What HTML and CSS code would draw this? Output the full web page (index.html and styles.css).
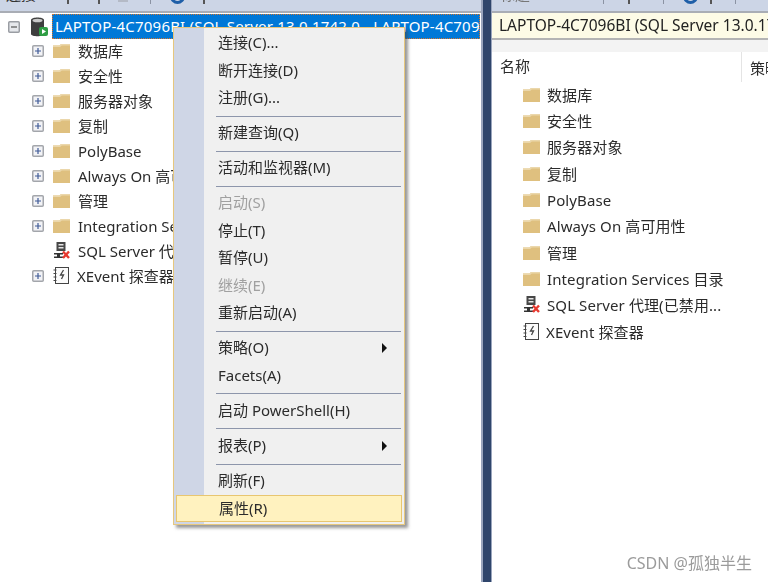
FILE: index.html
```html
<!DOCTYPE html>
<html lang="zh">
<head>
<meta charset="utf-8">
<title>SSMS</title>
<link rel="stylesheet" href="styles.css">
</head>
<body>
<svg class="defs" width="0" height="0">
  <symbol id="folder" viewBox="0 0 17 15">
    <path d="M0 2.500h6.500L8 1h9v14H0z" fill="#dfc07f"/>
    <path d="M8 1h9v1.600H8.800L7 4H0V2.500h6.500z" fill="#ebd7ab"/>
  </symbol>
  <symbol id="plus" viewBox="0 0 12 12">
    <rect x=".75" y=".75" width="10.500" height="10.500" rx="1" fill="#f2f3f6" stroke="#a3a6ab" stroke-width="1.500"/>
    <path d="M3 6h6M6 3v6" stroke="#3f5a96" stroke-width="1.200"/>
  </symbol>
  <symbol id="agent" viewBox="0 0 17 17">
    <path d="M3.500 0h9v9h-9z" fill="#474747"/>
    <path d="M5.500 2h5v1.500h-5zM5.500 5h5v1.500h-5z" fill="#e6e6e6"/>
    <path d="M1 11h9v1.500H7v2h3V16H1v-1.500h3v-2H1z" fill="#333"/>
    <path d="M10 9.500l6 6.500M16 9.500l-6 6.500" stroke="#e8392f" stroke-width="2.400"/>
  </symbol>
  <symbol id="xevent" viewBox="0 0 16 17">
    <rect x="2.500" y=".5" width="13" height="16" fill="#fbfbfb" stroke="#444"/>
    <path d="M.5 3h3M.5 6.500h3M.5 10h3M.5 13.500h3" stroke="#444"/>
    <path d="M10.500 3L7.500 8h3l-2 4" fill="none" stroke="#444" stroke-width="1.300"/>
  </symbol>
</svg>
<div class="screen">
  <section class="left">
    <div class="toolbar">
      <span class="tool-text tool-l1">连接</span>
      <span class="tool-bit tool-l2"></span>
      <span class="tool-bit tool-l3"></span>
      <span class="tool-faint-box tool-l4"></span>
      <span class="tool-sep tool-l5"></span>
      <span class="tool-circle tool-l6"></span>
      <span class="tool-bit tool-l7"></span>
    </div>
    <div class="tree">
      <div class="tree-row root-row">
        <svg class="expander" width="12" height="12" viewBox="0 0 12 12"><rect x=".75" y=".75" width="10.500" height="10.500" rx="1" fill="#e6e8ec" stroke="#9a9da3" stroke-width="1.500"/><path d="M3 6h6" stroke="#555" stroke-width="1.200"/></svg>
        <svg class="server" width="18" height="20" viewBox="0 0 18 20">
          <path d="M1 3c0-3.500 13-3.500 13 0v14c0 3-13 3-13 0z" fill="#3e3e3e"/>
          <ellipse cx="7.500" cy="3.500" rx="5" ry="1.800" fill="#c9c9c9"/>
          <rect x="9" y="10" width="9" height="9" rx="2" fill="#2f9e44"/>
          <path d="M12 12l4 2.500-4 2.500z" fill="#fff"/>
        </svg>
        <div class="selected">LAPTOP-4C7096BI (SQL Server 13.0.1742.0 - LAPTOP-4C7096BI\user)</div>
      </div>
      <div class="tree-row"><svg class="plus" width="12" height="12"><use href="#plus"/></svg><svg class="ico" width="17" height="15"><use href="#folder"/></svg><span>数据库</span></div>
      <div class="tree-row"><svg class="plus" width="12" height="12"><use href="#plus"/></svg><svg class="ico" width="17" height="15"><use href="#folder"/></svg><span>安全性</span></div>
      <div class="tree-row"><svg class="plus" width="12" height="12"><use href="#plus"/></svg><svg class="ico" width="17" height="15"><use href="#folder"/></svg><span>服务器对象</span></div>
      <div class="tree-row"><svg class="plus" width="12" height="12"><use href="#plus"/></svg><svg class="ico" width="17" height="15"><use href="#folder"/></svg><span>复制</span></div>
      <div class="tree-row"><svg class="plus" width="12" height="12"><use href="#plus"/></svg><svg class="ico" width="17" height="15"><use href="#folder"/></svg><span>PolyBase</span></div>
      <div class="tree-row"><svg class="plus" width="12" height="12"><use href="#plus"/></svg><svg class="ico" width="17" height="15"><use href="#folder"/></svg><span>Always On 高可用性</span></div>
      <div class="tree-row"><svg class="plus" width="12" height="12"><use href="#plus"/></svg><svg class="ico" width="17" height="15"><use href="#folder"/></svg><span>管理</span></div>
      <div class="tree-row"><svg class="plus" width="12" height="12"><use href="#plus"/></svg><svg class="ico" width="17" height="15"><use href="#folder"/></svg><span>Integration Services 目录</span></div>
      <div class="tree-row"><span class="plus-gap"></span><svg class="ico" width="17" height="17"><use href="#agent"/></svg><span>SQL Server 代理(已禁用代理 XP)</span></div>
      <div class="tree-row"><svg class="plus" width="12" height="12"><use href="#plus"/></svg><svg class="ico" width="16" height="17"><use href="#xevent"/></svg><span>XEvent 探查器</span></div>
    </div>
  </section>

  <div class="splitter"></div>

  <section class="right">
    <div class="toolbar">
      <span class="tool-text tool-faint tool-r1">标题</span>
      <span class="tool-sep tool-r2"></span>
      <span class="tool-bit tool-r3"></span>
      <span class="tool-sep tool-r4"></span>
      <span class="tool-circle tool-r5"></span>
      <span class="tool-bit tool-r6"></span>
      <span class="tool-sep tool-r7"></span>
    </div>
    <div class="summary-title">LAPTOP-4C7096BI (SQL Server 13.0.1742.0 - LAPTOP-4C7096BI)</div>
    <div class="band"></div>
    <div class="list-head"><div class="col-name">名称</div><div class="col-policy">策略</div></div>
    <div class="list">
      <div class="list-row"><svg class="ico" width="17" height="15"><use href="#folder"/></svg><span>数据库</span></div>
      <div class="list-row"><svg class="ico" width="17" height="15"><use href="#folder"/></svg><span>安全性</span></div>
      <div class="list-row"><svg class="ico" width="17" height="15"><use href="#folder"/></svg><span>服务器对象</span></div>
      <div class="list-row"><svg class="ico" width="17" height="15"><use href="#folder"/></svg><span>复制</span></div>
      <div class="list-row"><svg class="ico" width="17" height="15"><use href="#folder"/></svg><span>PolyBase</span></div>
      <div class="list-row"><svg class="ico" width="17" height="15"><use href="#folder"/></svg><span>Always On 高可用性</span></div>
      <div class="list-row"><svg class="ico" width="17" height="15"><use href="#folder"/></svg><span>管理</span></div>
      <div class="list-row"><svg class="ico" width="17" height="15"><use href="#folder"/></svg><span>Integration Services 目录</span></div>
      <div class="list-row"><svg class="ico" width="17" height="17"><use href="#agent"/></svg><span>SQL Server 代理(已禁用...</span></div>
      <div class="list-row"><svg class="ico" width="16" height="17"><use href="#xevent"/></svg><span>XEvent 探查器</span></div>
    </div>
  </section>

  <div class="menu">
    <div class="mi">连接(C)...</div>
    <div class="mi">断开连接(D)</div>
    <div class="mi">注册(G)...</div>
    <div class="sep"></div>
    <div class="mi">新建查询(Q)</div>
    <div class="sep"></div>
    <div class="mi">活动和监视器(M)</div>
    <div class="sep"></div>
    <div class="mi off">启动(S)</div>
    <div class="mi">停止(T)</div>
    <div class="mi">暂停(U)</div>
    <div class="mi off">继续(E)</div>
    <div class="mi">重新启动(A)</div>
    <div class="sep"></div>
    <div class="mi has-sub">策略(O)<i class="arrow"></i></div>
    <div class="mi">Facets(A)</div>
    <div class="sep"></div>
    <div class="mi">启动 PowerShell(H)</div>
    <div class="sep"></div>
    <div class="mi has-sub">报表(P)<i class="arrow"></i></div>
    <div class="sep"></div>
    <div class="mi">刷新(F)</div>
    <div class="mi hover">属性(R)</div>
  </div>

  <div class="watermark">CSDN @孤独半生</div>
</div>
</body>
</html>
```

FILE: styles.css
```css
* { box-sizing: border-box; }
html, body { margin: 0; padding: 0; background: #fff; }
.defs { position: absolute; }
.screen {
  position: relative;
  width: 768px;
  height: 582px;
  display: flex;
  overflow: hidden;
  font-family: "Noto Sans", "Noto Sans CJK SC", sans-serif;
  font-size: 15px;
  color: #2b2b2b;
  filter: blur(0.35px);
}
.left { width: 481px; flex: none; display: flex; flex-direction: column; }
.right { flex: 1; min-width: 0; display: flex; flex-direction: column; }
.splitter {
  width: 11px;
  flex: none;
  background: #2f456b;
  border-left: 2px solid #9aa5bd;
  border-right: 1px solid #9aa5bd;
}

/* Toolbars: only the bottom of each control is visible above the crop */
.toolbar {
  height: 13px;
  flex: none;
  background: #ccd5e6;
  border-bottom: 2px solid #a9adb5;
  display: flex;
  align-items: flex-start;
  overflow: hidden;
}
.tool-text { font-size: 15px; line-height: 20px; margin-top: -16px; flex: none; color: #333; }
.tool-faint { color: #777; }
.tool-bit { width: 2px; height: 4px; background: #555; flex: none; }
.tool-sep { width: 1px; height: 4px; background: #8b93a3; flex: none; }
.tool-faint-box { width: 10px; height: 2px; background: #b4bac6; flex: none; }
.tool-circle {
  width: 15px;
  height: 15px;
  margin-top: -11px;
  border-radius: 50%;
  border: 3px solid #1f5fa8;
  background: #ccd5e6;
  flex: none;
}
.tool-l1 { margin-left: 6px; }
.tool-l2 { margin-left: 31px; }
.tool-l3 { margin-left: 29px; }
.tool-l4 { margin-left: 18px; }
.tool-l5 { margin-left: 22px; }
.tool-l6 { margin-left: 19px; }
.tool-l7 { margin-left: 18px; }
.tool-r1 { margin-left: 8px; }
.tool-r2 { margin-left: 73px; }
.tool-r3 { margin-left: 24px; }
.tool-r4 { margin-left: 33px; }
.tool-r5 { margin-left: 19px; }
.tool-r6 { margin-left: 12px; }
.tool-r7 { margin-left: 23px; }

.tree { flex: 1; min-height: 0; }
.tree-row {
  height: 25px;
  display: flex;
  align-items: center;
  padding-left: 32px;
  white-space: nowrap;
}
.tree-row .plus { margin-right: 9px; flex: none; }
.plus-gap { width: 12px; margin-right: 9px; flex: none; }
.ico { flex: none; margin-right: 8px; }
.root-row { padding-left: 8px; overflow: hidden; margin-top: 1px; height: 25px; margin-bottom: -1px; }
.expander { flex: none; margin-right: 10px; }
.server { flex: none; margin-right: 4px; }
.selected {
  flex: 1;
  min-width: 0;
  height: 25px;
  line-height: 23px;
  padding-left: 2px;
  background: #0078d7;
  color: #fff;
  border: 1px dotted #d9762a;
  overflow: hidden;
  margin-right: 1px;
  letter-spacing: 0.2px;
}

.summary-title {
  height: 27px;
  line-height: 25px;
  flex: none;
  background: #fdfbe6;
  border-bottom: 2px solid #b4b4b4;
  padding-left: 7px;
  white-space: nowrap;
  overflow: hidden;
  color: #222;
  font-size: 15.500px;
}
.band { height: 12px; flex: none; background: #f3f3f3; }
.list-head { height: 30px; flex: none; display: flex; align-items: center; }
.col-name { width: 250px; padding-left: 8px; border-right: 1px solid #e4e4e4; height: 30px; line-height: 29px; flex: none; }
.col-policy { padding-left: 8px; white-space: nowrap; }
.list { margin-top: -1px; }
.list-row {
  height: 26.350px;
  display: flex;
  align-items: center;
  padding-left: 31px;
  white-space: nowrap;
  letter-spacing: 0.1px;
}
.list-row .ico { margin-right: 7px; }

.menu {
  position: absolute;
  left: 173px;
  top: 27px;
  width: 232px;
  height: 498px;
  padding: 1px 3px 2px 1px;
  display: flex;
  flex-direction: column;
  background: linear-gradient(to right, #cfd6e6 30px, #f0f0f0 30px);
  border: 1px solid #e6c77e;
  box-shadow: 3px 3px 3px rgba(70, 70, 70, 0.55);
}
.mi {
  height: 27.500px;
  flex: none;
  line-height: 27.500px;
  padding-left: 43px;
  position: relative;
  white-space: nowrap;
  color: #2b2b2b;
}
.off { color: #a0a0a0; }
.sep {
  height: 7.600px;
  flex: none;
  margin-left: 41px;
  position: relative;
}
.sep::after {
  content: "";
  position: absolute;
  left: 0;
  right: 0;
  top: 4px;
  height: 1px;
  background: #8d96ab;
}
.arrow {
  position: absolute;
  right: 14px;
  top: 9px;
  border-left: 5px solid #111;
  border-top: 5px solid transparent;
  border-bottom: 5px solid transparent;
}
.hover {
  background: #fff2bf;
  border: 1px solid #e8c670;
  line-height: 25.500px;
  padding-left: 42px;
  margin-left: 1px;
  margin-right: -1px;
}
.watermark {
  position: absolute;
  right: 16px;
  bottom: 8px;
  font-size: 16px;
  color: #9b9b9b;
  white-space: nowrap;
}
```
